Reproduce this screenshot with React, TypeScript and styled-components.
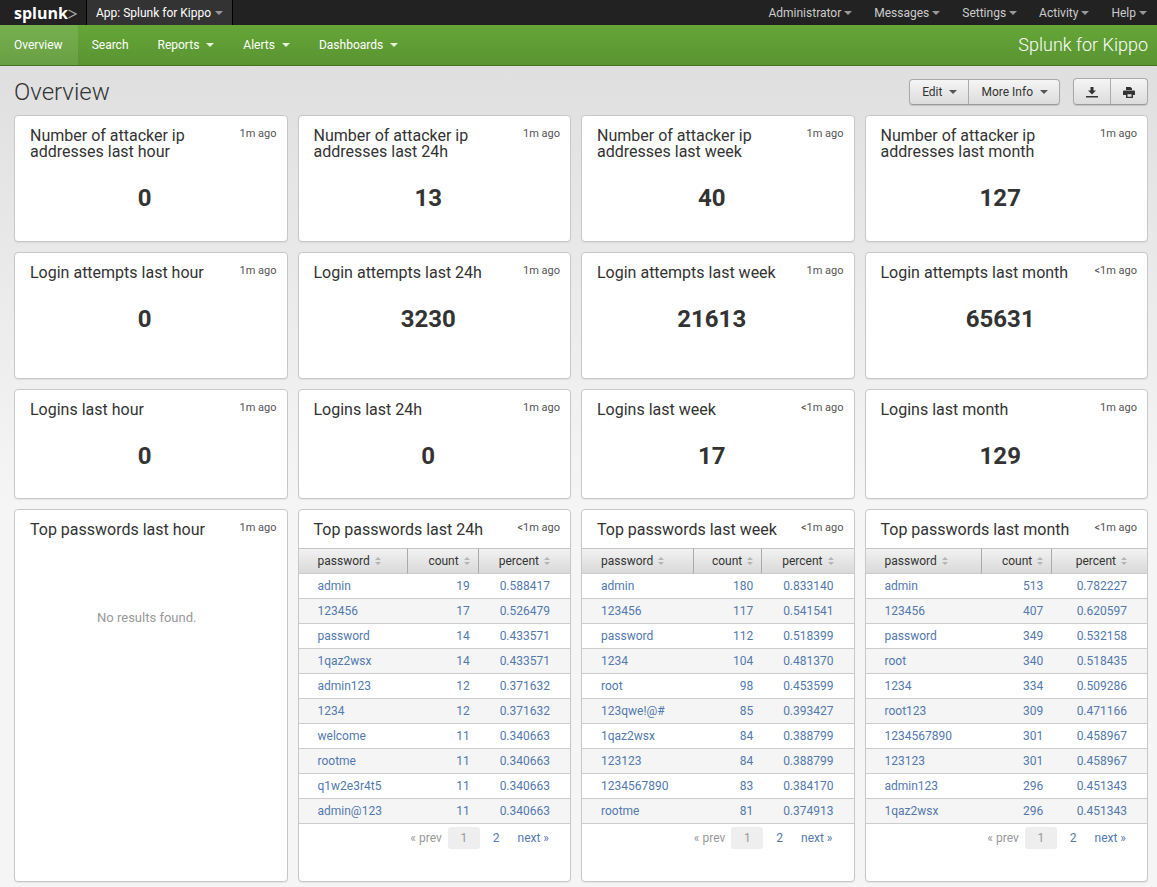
import React from 'react';
import styled, { createGlobalStyle, css } from 'styled-components';

const GlobalStyle = createGlobalStyle`
  * { box-sizing: border-box; }
  body {
    margin: 0;
    min-height: 100vh;
    background: #f5f5f5;
    color: #333;
    font: 12px/16px Roboto, "Liberation Sans", sans-serif;
  }
  button { font: inherit; color: inherit; border: 0; background: none; padding: 0; cursor: pointer; }
  a { color: inherit; text-decoration: none; }
`;

const Page = styled.div`
  background: linear-gradient(#dcdcdc, #f5f5f5 500px);
`;

const TopBar = styled.header`
  display: flex;
  align-items: stretch;
  height: 25px;
  background: #222;
  color: #ccc;
`;

const Logo = styled.a`
  display: flex;
  align-items: center;
  width: 86px;
  padding-left: 14px;
  color: #fff;
  font: bold 16px/24px "Open Sans", "Noto Sans", sans-serif;
  svg { margin-top: 3px; }
`;

const AppButton = styled.button`
  display: flex;
  align-items: center;
  gap: 4px;
  padding: 0 9px;
  border: solid #000;
  border-width: 0 1px;
  background: #333;
  color: #fff;
`;

const UserMenus = styled.nav`
  display: flex;
  gap: 22px;
  margin-left: auto;
  padding-right: 10px;
`;

const MenuButton = styled.button`
  display: flex;
  align-items: center;
  gap: 3px;
`;

const Caret = styled.span<{ $color: string }>`
  border: solid transparent;
  border-width: 4px 4px 0;
  border-top-color: ${p => p.$color};
`;

const AppBar = styled.nav`
  display: flex;
  align-items: stretch;
  height: 41px;
  background: linear-gradient(#65a637, #5a9432);
  border-bottom: 1px solid #45741f;
  color: #fff;
`;

const navItem = css`
  display: flex;
  align-items: center;
  gap: 7px;
`;

const NavLink = styled.a<{ $active?: boolean }>`
  ${navItem}
  padding: 0 15px 0 14px;
  ${p => p.$active && 'background: linear-gradient(#76b04d, #699f45);'}
`;

const NavMenu = styled.button`
  ${navItem}
  padding: 0 15px 0 14px;
`;

const AppName = styled.div`
  margin-left: auto;
  padding-right: 9px;
  font-size: 18px;
  line-height: 40px;
  font-weight: 300;
`;

const Main = styled.main`
  padding: 12px 9px 5px 14px;
`;

const TitleRow = styled.div`
  display: flex;
  align-items: center;
  justify-content: space-between;
  height: 27px;
  margin-bottom: 10px;
`;

const PageTitle = styled.h1`
  margin: 0;
  font-size: 24px;
  line-height: 28px;
  font-weight: 300;
`;

const Actions = styled.div`
  display: flex;
  align-items: flex-end;
  gap: 13px;
`;

const ButtonGroup = styled.div`
  display: flex;
  border: 1px solid #aaa;
  border-bottom-color: #999;
  border-radius: 4px;
  background: linear-gradient(#f5f5f5, #dcdcdc);
  box-shadow: 0 1px 1px #0002;
`;

const ActionButton = styled.button<{ $icon?: boolean }>`
  display: flex;
  align-items: center;
  justify-content: center;
  gap: 7px;
  height: ${p => (p.$icon ? 25 : 24)}px;
  padding: ${p => (p.$icon ? '0 12px' : '0 11px 0 12px')};
  & + & { border-left: 1px solid #aaa; }
`;

const Grid = styled.div`
  display: grid;
  grid-template-columns: repeat(3, calc(25% - 10px)) 1fr;
  gap: 10px;
`;

const Panel = styled.section<{ $minHeight: number }>`
  display: flex;
  flex-direction: column;
  min-width: 0;
  min-height: ${p => p.$minHeight}px;
  background: #fff;
  border: 1px solid #c8c8c8;
  border-radius: 4px;
  box-shadow: 0 1px 1px #0001;
`;

const PanelHead = styled.header`
  display: flex;
  justify-content: space-between;
  gap: 16px;
  padding: 12px 10px 10px 15px;
`;

const PanelTitle = styled.h2`
  margin: 0;
  font-size: 16px;
  line-height: 16px;
  font-weight: 400;
`;

const Age = styled.span`
  flex: none;
  font-size: 11px;
  line-height: 12px;
  color: #555;
`;

const Value = styled.div`
  padding: 14px 12px 0 0;
  font-size: 24px;
  line-height: 28px;
  font-weight: 700;
  text-align: center;
`;

const Empty = styled.p`
  margin: 62px 10px 0 0;
  padding-left: 2px;
  font-size: 13px;
  color: #999;
  text-align: center;
`;

const Table = styled.table`
  width: 100%;
  table-layout: fixed;
  border-collapse: separate;
  border-spacing: 0;
`;

const Col = styled.col<{ $width: number }>`
  width: ${p => p.$width}%;
`;

const cell = css<{ $right?: boolean }>`
  height: 25px;
  padding: 0 8px 0 19px;
  border-bottom: 1px solid #ccc;
  text-align: ${p => (p.$right ? 'right' : 'left')};
  &:nth-child(2) { padding-left: 8px; }
  &:last-child { padding: 0 20px 0 8px; }
`;

const HeadCell = styled.th<{ $right?: boolean }>`
  ${cell}
  height: 26px;
  border-top: 1px solid #c4c4c4;
  background: linear-gradient(#f2f2f2, #d9d9d9);
  font-weight: 400;
  & + & { border-left: 1px solid #aaa; }
`;

const SortButton = styled.button`
  display: inline-flex;
  align-items: center;
  gap: 5px;
  vertical-align: middle;
`;

const Row = styled.tr`
  &:nth-child(even) { background: #f5f5f5; }
`;

const Cell = styled.td<{ $right?: boolean }>`
  ${cell}
  color: #5379af;
`;

const Pager = styled.nav`
  display: flex;
  justify-content: flex-end;
  align-items: center;
  padding: 3px 21px 32px 0;
  color: #5379af;
  line-height: 22px;
`;

const Prev = styled.span`
  margin-right: 6px;
  color: #999;
`;

const Current = styled.span`
  width: 32px;
  border-radius: 3px;
  background: #eee;
  color: #999;
  text-align: center;
`;

const PageLink = styled.a`
  margin-left: 13px;
  & + & { margin-left: 18px; }
`;

const SortIcon = () => (
  <svg width="6" height="8" viewBox="0 0 6 8" fill="#b5b5b5" aria-hidden="true">
    <path d="M0 3L3 0L6 3ZM0 5H6L3 8Z" />
  </svg>
);

const DownloadIcon = () => (
  <svg width="12" height="12" viewBox="0 0 12 12" fill="#333" aria-hidden="true">
    <path d="M4.5 1H7.5V4.5H10L6 8.5L2 4.5H4.5ZM0 10H12V11.5H0Z" />
  </svg>
);

const PrintIcon = () => (
  <svg width="12" height="12" viewBox="0 0 12 12" fill="#333" aria-hidden="true">
    <path d="M3 1H7.5L9 2.5V4H3ZM1 4.5H11Q12 4.5 12 5.5V9H9.8V7H3V9H0V5.5Q0 4.5 1 4.5Z" />
    <path fillRule="evenodd" d="M3 7H10V12H3ZM4.5 8.3V10.7H8.5V8.3Z" />
  </svg>
);

type Stat = { title: string; age: string; value: string };

const statRows: { height: number; stats: Stat[] }[] = [
  {
    height: 127,
    stats: [
      { title: 'Number of attacker ip addresses last hour', age: '1m ago', value: '0' },
      { title: 'Number of attacker ip addresses last 24h', age: '1m ago', value: '13' },
      { title: 'Number of attacker ip addresses last week', age: '1m ago', value: '40' },
      { title: 'Number of attacker ip addresses last month', age: '1m ago', value: '127' },
    ],
  },
  {
    height: 127,
    stats: [
      { title: 'Login attempts last hour', age: '1m ago', value: '0' },
      { title: 'Login attempts last 24h', age: '1m ago', value: '3230' },
      { title: 'Login attempts last week', age: '1m ago', value: '21613' },
      { title: 'Login attempts last month', age: '<1m ago', value: '65631' },
    ],
  },
  {
    height: 110,
    stats: [
      { title: 'Logins last hour', age: '1m ago', value: '0' },
      { title: 'Logins last 24h', age: '1m ago', value: '0' },
      { title: 'Logins last week', age: '<1m ago', value: '17' },
      { title: 'Logins last month', age: '1m ago', value: '129' },
    ],
  },
];

type PasswordTable = { title: string; widths: number[]; rows: string[][] };

const tables: PasswordTable[] = [
  {
    title: 'Top passwords last 24h',
    widths: [40, 26, 34],
    rows: [
      ['admin', '19', '0.588417'],
      ['123456', '17', '0.526479'],
      ['password', '14', '0.433571'],
      ['1qaz2wsx', '14', '0.433571'],
      ['admin123', '12', '0.371632'],
      ['1234', '12', '0.371632'],
      ['welcome', '11', '0.340663'],
      ['rootme', '11', '0.340663'],
      ['q1w2e3r4t5', '11', '0.340663'],
      ['admin@123', '11', '0.340663'],
    ],
  },
  {
    title: 'Top passwords last week',
    widths: [41, 25, 34],
    rows: [
      ['admin', '180', '0.833140'],
      ['123456', '117', '0.541541'],
      ['password', '112', '0.518399'],
      ['1234', '104', '0.481370'],
      ['root', '98', '0.453599'],
      ['123qwe!@#', '85', '0.393427'],
      ['1qaz2wsx', '84', '0.388799'],
      ['123123', '84', '0.388799'],
      ['1234567890', '83', '0.384170'],
      ['rootme', '81', '0.374913'],
    ],
  },
  {
    title: 'Top passwords last month',
    widths: [41, 25, 34],
    rows: [
      ['admin', '513', '0.782227'],
      ['123456', '407', '0.620597'],
      ['password', '349', '0.532158'],
      ['root', '340', '0.518435'],
      ['1234', '334', '0.509286'],
      ['root123', '309', '0.471166'],
      ['1234567890', '301', '0.458967'],
      ['123123', '301', '0.458967'],
      ['admin123', '296', '0.451343'],
      ['1qaz2wsx', '296', '0.451343'],
    ],
  },
];

const columns = ['password', 'count', 'percent'];

function Heading({ title, age }: { title: string; age: string }) {
  return (
    <PanelHead>
      <PanelTitle>{title}</PanelTitle>
      <Age>{age}</Age>
    </PanelHead>
  );
}

function PasswordPanel({ title, widths, rows }: PasswordTable) {
  return (
    <Panel $minHeight={373}>
      <Heading title={title} age="<1m ago" />
      <Table>
        <colgroup>
          {widths.map((w, i) => <Col key={i} $width={w} />)}
        </colgroup>
        <thead>
          <tr>
            {columns.map((c, i) => (
              <HeadCell key={c} $right={i > 0} scope="col">
                <SortButton>{c}<SortIcon /></SortButton>
              </HeadCell>
            ))}
          </tr>
        </thead>
        <tbody>
          {rows.map(r => (
            <Row key={r[0]}>
              {r.map((v, i) => <Cell key={i} $right={i > 0}><a href="#">{v}</a></Cell>)}
            </Row>
          ))}
        </tbody>
      </Table>
      <Pager aria-label={`${title} pages`}>
        <Prev>« prev</Prev>
        <Current>1</Current>
        <PageLink href="#">2</PageLink>
        <PageLink href="#">next »</PageLink>
      </Pager>
    </Panel>
  );
}

export default function App() {
  return (
    <Page>
      <GlobalStyle />
      <TopBar>
        <Logo href="#">
          splunk
          <svg width="9" height="10" viewBox="0 0 9 10" fill="none" stroke="#aaa" strokeWidth="1.3" aria-hidden="true">
            <path d="M0.5 1L8 5L0.5 9" />
          </svg>
        </Logo>
        <AppButton>App: Splunk for Kippo<Caret $color="#999" /></AppButton>
        <UserMenus>
          {['Administrator', 'Messages', 'Settings', 'Activity', 'Help'].map(m => (
            <MenuButton key={m}>{m}<Caret $color="#999" /></MenuButton>
          ))}
        </UserMenus>
      </TopBar>
      <AppBar>
        <NavLink href="#" $active>Overview</NavLink>
        <NavLink href="#">Search</NavLink>
        {['Reports', 'Alerts', 'Dashboards'].map(m => (
          <NavMenu key={m}>{m}<Caret $color="#e4f3d8" /></NavMenu>
        ))}
        <AppName>Splunk for Kippo</AppName>
      </AppBar>
      <Main>
        <TitleRow>
          <PageTitle>Overview</PageTitle>
          <Actions>
            <ButtonGroup>
              <ActionButton>Edit<Caret $color="#555" /></ActionButton>
              <ActionButton>More Info<Caret $color="#555" /></ActionButton>
            </ButtonGroup>
            <ButtonGroup>
              <ActionButton $icon aria-label="Download"><DownloadIcon /></ActionButton>
              <ActionButton $icon aria-label="Print"><PrintIcon /></ActionButton>
            </ButtonGroup>
          </Actions>
        </TitleRow>
        <Grid>
          {statRows.map(row => row.stats.map(s => (
            <Panel key={s.title} $minHeight={row.height}>
              <Heading title={s.title} age={s.age} />
              <Value>{s.value}</Value>
            </Panel>
          )))}
          <Panel $minHeight={373}>
            <Heading title="Top passwords last hour" age="1m ago" />
            <Empty>No results found.</Empty>
          </Panel>
          {tables.map(t => <PasswordPanel key={t.title} {...t} />)}
        </Grid>
      </Main>
    </Page>
  );
}
